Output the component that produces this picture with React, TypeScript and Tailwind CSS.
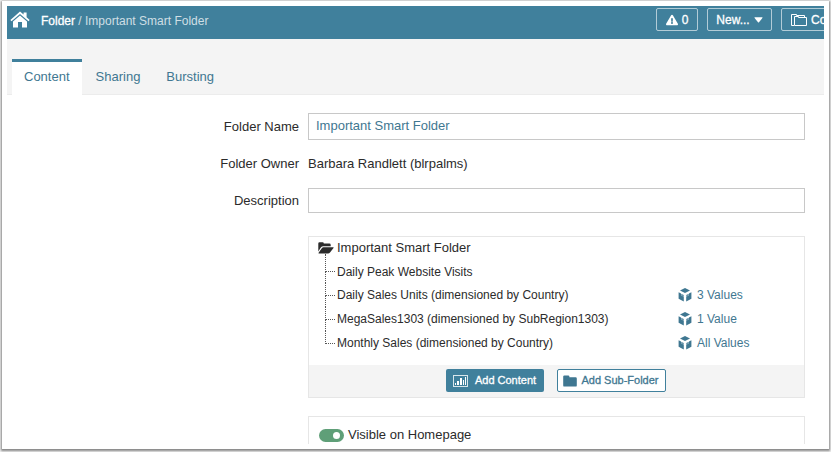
import React, { useState } from 'react';
import { FaExclamationTriangle } from 'react-icons/fa';

interface TreeItem {
  name: string;
  values?: string;
}

const tabs = ['Content', 'Sharing', 'Bursting'];

const items: TreeItem[] = [
  { name: 'Daily Peak Website Visits' },
  { name: 'Daily Sales Units (dimensioned by Country)', values: '3 Values' },
  { name: 'MegaSales1303 (dimensioned by SubRegion1303)', values: '1 Value' },
  { name: 'Monthly Sales (dimensioned by Country)', values: 'All Values' },
];

const HomeIcon = () => (
  <svg viewBox="0 0 20 17" className="w-5 h-[17px]" fill="currentColor">
    <path d="M10 0.4 13.6 3.5V1.4H16.6V6.2L19.6 8.9 18.5 10.2 10 3 1.5 10.2 0.4 8.9Z" />
    <path d="M10 4.6 17 10.5V16.4H12V11H8V16.4H3V10.5Z" />
  </svg>
);

const CaretIcon = () => (
  <svg viewBox="0 0 9 6" className="w-[9px] h-[6px]" fill="currentColor">
    <path d="M0.8 0.3H8.2Q8.8 0.5 8.4 1L5 5.2Q4.5 5.7 4 5.2L0.6 1Q0.2 0.5 0.8 0.3Z" />
  </svg>
);

const CopyIcon = () => (
  <svg viewBox="0 0 16 14" className="w-4 h-[14px] shrink-0" fill="none" stroke="currentColor">
    <path d="M3 12.5H0.5V1.5H5.5V2.5H13.5V4.5" />
    <path d="M3.5 12.5V3.5H7.5V4.5H15.5V12.5Z" />
  </svg>
);

const FolderOpenIcon = () => (
  <svg viewBox="0 0 16 12" className="w-4 h-3" fill="currentColor">
    <path d="M0.3 9.5V1.5Q0.3 0.3 1.5 0.3H4.6Q5.8 0.3 5.8 1.6H11.4Q12.7 1.6 12.7 2.9V4.2H5.3Q3.8 4.2 2.8 5.4Z" />
    <path d="M5.4 5.2H15.2Q16 5.4 15.5 6.1L12 10.6Q11.3 11.6 10 11.6H0.9Q0.1 11.4 0.6 10.7L3.8 6.2Q4.5 5.2 5.4 5.2Z" />
  </svg>
);

const FolderIcon = () => (
  <svg viewBox="0 0 14 12" className="w-[14px] h-3" fill="currentColor">
    <path d="M0.2 1.6Q0.2 0.4 1.4 0.4H5.2Q6.4 0.4 6.4 1.6V2.2H12.6Q13.8 2.2 13.8 3.4V10.4Q13.8 11.6 12.6 11.6H1.4Q0.2 11.6 0.2 10.4Z" />
  </svg>
);

const CubeIcon = () => (
  <svg viewBox="0 0 14 14" className="w-[14px] h-[14px]" fill="currentColor">
    <path d="M7 0 12 2.4 7 5 2 2.4Z" />
    <path d="M0.6 4.2 3 5.5V7.2L5.8 8.7V13.6L0.6 10.8Z" />
    <path d="M13.4 4.2 11 5.5V7.2L8.2 8.7V13.6L13.4 10.8Z" />
    <path d="M3.4 5.7 5.8 7V8.7L3 7.2ZM10.6 5.7 8.2 7V8.7L11 7.2Z" opacity="0.8" />
  </svg>
);

const ChartIcon = () => (
  <svg viewBox="0 0 15 12" className="w-[15px] h-3" fill="currentColor">
    <rect x="0.5" y="0.5" width="14" height="11" fill="none" stroke="currentColor" strokeOpacity="0.8" />
    <rect x="2" y="8" width="1" height="2" />
    <rect x="4" y="6" width="2" height="4" />
    <rect x="7" y="3" width="2" height="7" />
    <rect x="10" y="5" width="1" height="5" />
    <rect x="12" y="2" width="1" height="8" />
  </svg>
);

const headerButton = 'h-[23px] shrink-0 flex items-center border border-white/60 rounded-xs text-xs [-webkit-text-stroke:0.3px]';

const App: React.FC = () => {
  const [tab, setTab] = useState('Content');
  const [name, setName] = useState('Important Smart Folder');
  const [description, setDescription] = useState('');
  const [visible, setVisible] = useState(true);

  return (
    <div className="h-screen bg-[#f4f4f4] pt-px px-[2px] pb-[3px] font-['Liberation_Sans',Arial,sans-serif] text-[13px] leading-4 text-[#2b2b2b]">
      <div className="h-full bg-white p-[5px] shadow-[0_1px_2px_1px_rgba(0,0,0,0.45)]">
        <div className="h-full overflow-hidden">
          {/* Header */}
          <header className="h-[33px] bg-[#40809c] text-white flex overflow-hidden">
            <a href="#" aria-label="Home" className="pl-[3px] pt-[5px]">
              <HomeIcon />
            </a>
            <nav className="flex-1 pl-[11px] pt-[7px] text-xs leading-4 text-white/75">
              <a href="#" className="text-white [-webkit-text-stroke:0.3px]">Folder</a> / Important Smart Folder
            </nav>
            <div className="flex gap-[9px] pt-[2px] w-[168px]">
              <button className={`${headerButton} w-[42px] justify-center gap-1`}>
                <FaExclamationTriangle className="w-3 h-3" />0
              </button>
              <button className={`${headerButton} w-[65px] justify-center gap-1`}>
                New...<CaretIcon />
              </button>
              <button className={`${headerButton} px-[9px] gap-1`}>
                <CopyIcon />Copy
              </button>
            </div>
          </header>

          {/* Tabs */}
          <div role="tablist" className="h-14 bg-[#f4f4f4] border-b border-[#ececec] flex items-end gap-[2px] pl-[5px]">
            {tabs.map(t => (
              <button
                key={t}
                role="tab"
                aria-selected={tab === t}
                onClick={() => setTab(t)}
                className={`h-9 px-3 pb-1 -mb-px border-t-[3px] text-[#3f7791] ${tab === t ? 'bg-white border-[#40809c]' : 'border-transparent'}`}
              >
                {t}
              </button>
            ))}
          </div>

          {/* Form */}
          <form className="grid grid-cols-[292px_1fr] gap-x-[9px] pr-[19px] pt-[18px] items-center">
            <label htmlFor="name" className="text-right">Folder Name</label>
            <input
              id="name"
              value={name}
              onChange={e => setName(e.target.value)}
              className="h-[27px] w-full border border-[#c8c8c8] px-[7px] pb-[2px] text-[#3f7791]"
            />
            <div className="h-12 flex items-center justify-end">Folder Owner</div>
            <div>Barbara Randlett (blrpalms)</div>
            <label htmlFor="description" className="text-right">Description</label>
            <input
              id="description"
              value={description}
              onChange={e => setDescription(e.target.value)}
              className="h-[25px] w-full border border-[#c8c8c8] px-[7px]"
            />

            {/* Folder tree */}
            <div className="col-start-2 mt-[23px] border border-[#e6e6e6] text-xs">
              <div className="h-32">
                <div className="flex items-center h-6 pb-[2px] pl-[9px] gap-[3px] text-[13px]">
                  <FolderOpenIcon />
                  Important Smart Folder
                </div>
                <ul className="pl-4">
                  {items.map((item, i) => (
                    <li key={item.name} className={`flex items-center ${i === 0 ? 'h-[22px]' : 'h-6'}`}>
                      <span className={`w-[10px] self-stretch flex flex-col ${i === 0 ? '-mt-[7px]' : ''}`}>
                        <span className="flex-1 border-l border-b border-dotted border-[#555]" />
                        <span className={`h-[11px] border-dotted border-[#555] ${i < items.length - 1 ? 'border-l' : ''}`} />
                      </span>
                      <span className="flex-1 pl-[2px]">{item.name}</span>
                      {item.values && (
                        <a href="#" className="w-[126px] flex items-center gap-[5px] text-[#3f7791]">
                          <CubeIcon />
                          {item.values}
                        </a>
                      )}
                    </li>
                  ))}
                </ul>
              </div>
              <div className="h-8 pr-[2px] pb-px bg-[#f4f4f4] flex justify-center items-center gap-[13px] text-[11px]">
                <button type="button" className="h-[23px] w-[98px] rounded-xs bg-[#40809c] text-white flex items-center justify-center gap-[7px] [-webkit-text-stroke:0.3px]">
                  <ChartIcon />Add Content
                </button>
                <button type="button" className="h-[23px] w-[109px] rounded-xs border border-[#40809c] bg-white text-[#3f7791] flex items-center justify-center gap-1 [-webkit-text-stroke:0.3px]">
                  <FolderIcon />Add Sub-Folder
                </button>
              </div>
            </div>

            <div className="col-start-2 mt-[18px] border border-[#e6e6e6] h-24 px-[10px] pt-[10px]">
              <label className="flex items-center gap-1">
                <input
                  type="checkbox"
                  checked={visible}
                  onChange={e => setVisible(e.target.checked)}
                  className="appearance-none w-[25px] h-[13px] rounded-full bg-[#a0a0a0] checked:bg-[#5f9f78] flex items-center px-1 checked:justify-end before:content-[''] before:w-[7px] before:h-[7px] before:rounded-full before:bg-white"
                />
                Visible on Homepage
              </label>
            </div>
          </form>
        </div>
      </div>
    </div>
  );
};

export default App;
